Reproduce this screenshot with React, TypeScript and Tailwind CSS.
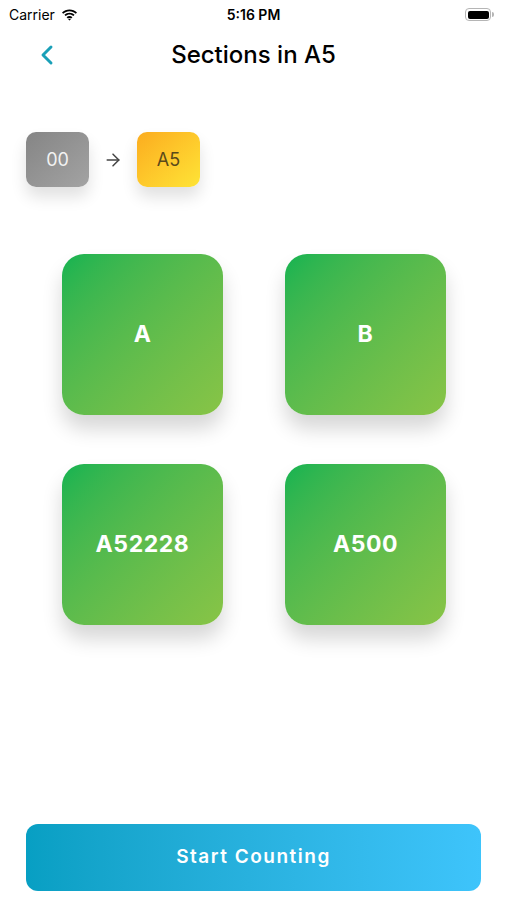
import { ChevronLeft, ArrowRight } from "lucide-react"

const SECTIONS = ["A", "B", "A52228", "A500"]

function WifiIcon() {
  return (
    <svg width="17" height="12" viewBox="0 0 17 12" fill="#000">
      <path d="M8.5 2.2c2.4 0 4.6.9 6.3 2.5l1.2-1.3C14 1.5 11.4.4 8.5.4S3 1.5 1 3.4l1.2 1.3C3.9 3.1 6.1 2.2 8.5 2.2z" />
      <path d="M8.5 5.6c1.5 0 2.8.6 3.9 1.5l1.2-1.3C12.2 4.6 10.4 3.8 8.5 3.8s-3.7.8-5.1 2l1.2 1.3c1.1-.9 2.4-1.5 3.9-1.5z" />
      <path d="M8.5 8.9c.6 0 1.2.2 1.6.6l1.3-1.3c-.8-.7-1.8-1.1-2.9-1.1s-2.1.4-2.9 1.1l1.3 1.3c.4-.4 1-.6 1.6-.6zM8.5 11.6l1.4-1.4c-.4-.3-.9-.5-1.4-.5s-1 .2-1.4.5z" />
    </svg>
  )
}

function Battery() {
  return (
    <div className="flex items-center">
      <div className="w-[26px] h-[13px] rounded-[4px] border border-[#b5b5b5] p-[1.5px]">
        <div className="w-full h-full rounded-[2px] bg-black" />
      </div>
      <div className="w-[2px] h-[5px] rounded-r-sm bg-[#b5b5b5] ml-[1px]" />
    </div>
  )
}

export default function App() {
  return (
    <div
      className="h-[900px] w-full bg-white flex flex-col"
      style={{ fontFamily: "Inter, 'Liberation Sans', sans-serif" }}
    >
      {/* Status bar */}
      <div className="h-[28px] flex items-center justify-between px-[9px] pt-[1px] relative">
        <div className="flex items-center gap-[6px]">
          <span className="text-[14px] text-black">Carrier</span>
          <WifiIcon />
        </div>
        <span className="absolute left-1/2 -translate-x-1/2 text-[14px] font-semibold text-black">5:16 PM</span>
        <div className="pr-[4px]">
          <Battery />
        </div>
      </div>

      {/* Nav bar */}
      <div className="h-[54px] flex items-center relative">
        <ChevronLeft className="absolute left-[31px] text-[#1aa0b8]" size={32} strokeWidth={2.2} />
        <p className="w-full text-center text-[24px] font-medium text-black">Sections in A5</p>
      </div>

      {/* Path chips */}
      <div className="flex items-center mt-[50px] px-[26px]">
        <div className="w-[63px] h-[55px] rounded-[10px] bg-gradient-to-br from-[#858585] to-[#a3a3a3] flex items-center justify-center text-[18px] text-[#f2f2f2] shadow-[0_10px_16px_rgba(0,0,0,0.12)]">
          00
        </div>
        <ArrowRight className="mx-[14px] text-[#444]" size={20} strokeWidth={1.8} />
        <div className="w-[63px] h-[55px] rounded-[10px] bg-gradient-to-br from-[#fbac1f] to-[#fee436] flex items-center justify-center text-[18px] text-[#5a4a1a] shadow-[0_10px_16px_rgba(0,0,0,0.12)]">
          A5
        </div>
      </div>

      {/* Section grid */}
      <div className="grid grid-cols-[161px_161px] gap-x-[62px] gap-y-[49px] justify-center mt-[67px] pl-[1px]">
        {SECTIONS.map((s) => (
          <div
            key={s}
            className="w-[161px] h-[161px] rounded-[22px] bg-gradient-to-br from-[#0fb351] to-[#88c446] flex items-center justify-center text-white text-[23px] font-bold tracking-wide shadow-[0_14px_20px_rgba(0,0,0,0.16)]"
          >
            {s}
          </div>
        ))}
      </div>

      <div className="flex-1" />

      {/* Start button */}
      <div className="px-[26px] pb-[9px]">
        <button className="w-full h-[67px] rounded-[12px] bg-gradient-to-r from-[#079fc3] to-[#3ec4fb] text-white text-[19px] font-semibold tracking-[0.08em]">
          Start Counting
        </button>
      </div>
    </div>
  )
}
